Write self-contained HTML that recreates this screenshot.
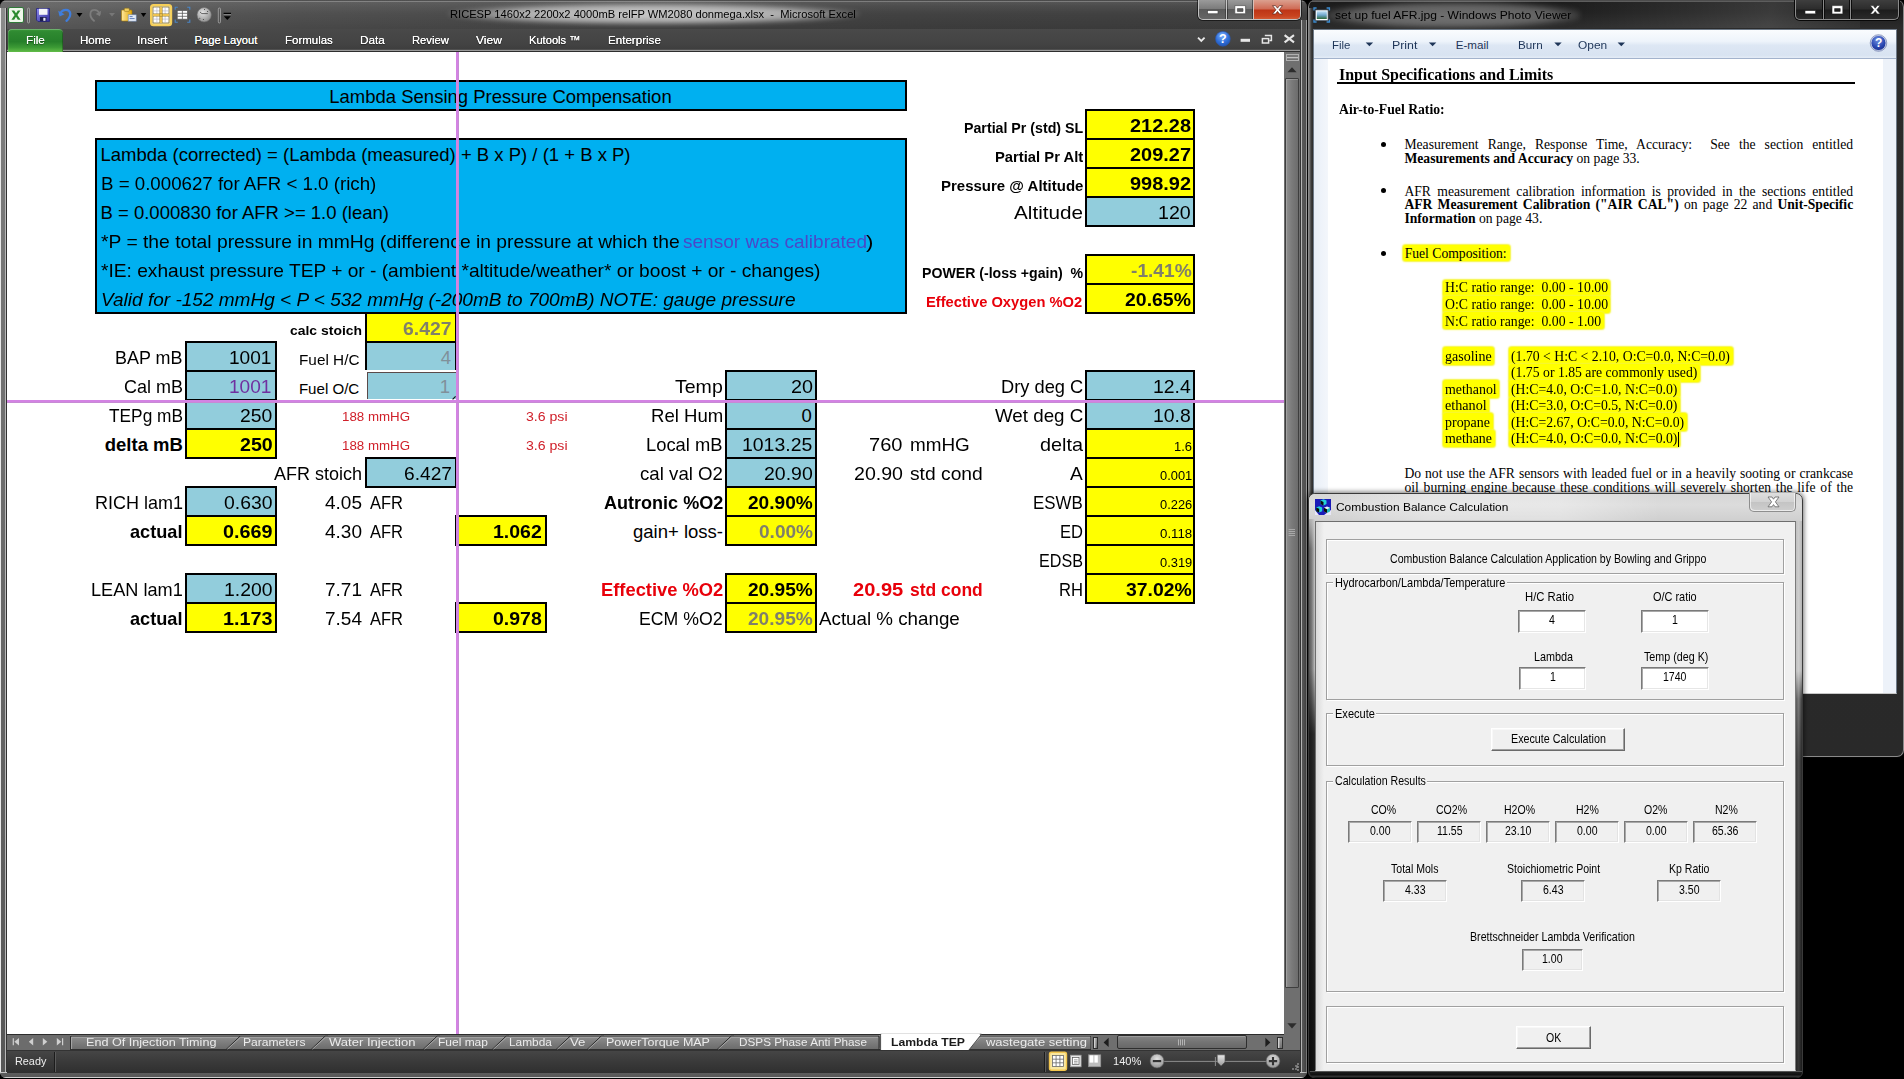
<!DOCTYPE html>
<html><head><meta charset="utf-8"><title>Lambda TEP</title>
<style>
html,body{margin:0;padding:0;background:#000;}
body{width:1904px;height:1079px;position:relative;overflow:hidden;font-family:'Liberation Sans',sans-serif;}
.b{position:absolute;box-sizing:border-box;}
.t{position:absolute;white-space:pre;line-height:1;transform-origin:0 0;}
svg{position:absolute;overflow:visible;}

#excel{position:absolute;left:0;top:0;width:1307px;height:1078px;border-radius:7px 7px 6px 6px;overflow:hidden;background:#4a4a4a;box-shadow:inset 0 0 0 1px #2b2b2b;}
#sheet{position:absolute;left:7px;top:52px;width:1277px;height:982px;background:#fff;overflow:hidden;}
.rt{color:#fff;text-shadow:0 0 1px rgba(255,255,255,.55);}
.st{color:#e6e6e6;}

#photo{position:absolute;left:0;top:0;width:1904px;height:1079px;}
.hl{position:absolute;background:#ffff00;border-radius:3px;box-shadow:0 0 1.5px 0.5px #f6f63a;}

#dialog{position:absolute;left:0;top:0;width:1904px;height:1079px;}
.gb{position:absolute;box-sizing:border-box;border:1px solid #a0a0a0;box-shadow:inset 1px 1px 0 #fff,1px 1px 0 #fff;}
.gl{position:absolute;background:#f0f0f0;height:12px;}
.in{position:absolute;box-sizing:border-box;background:#fff;border:1px solid;border-color:#7a7a7a #fff #fff #7a7a7a;box-shadow:inset 1px 1px 0 #a8a8a8,inset -1px -1px 0 #e6e6e6;}
.ro{position:absolute;box-sizing:border-box;background:#f0f0f0;border:1px solid;border-color:#7a7a7a #fff #fff #7a7a7a;box-shadow:inset 1px 1px 0 #a8a8a8,inset -1px -1px 0 #e3e3e3;}
.bt{position:absolute;box-sizing:border-box;background:#f0f0f0;border:1px solid;border-color:#fff #6a6a6a #6a6a6a #fff;box-shadow:inset -1px -1px 0 #a0a0a0,inset 1px 1px 0 #f8f8f8;}
</style></head>
<body>
<!-- Windows Photo Viewer -->
<div id="photo"><div class="b" style="left:1308px;top:0px;width:596px;height:756.6px;background:linear-gradient(#0c0c0c 0,#8c8c8c 1px,#1c1c1c 2.2px,#1e1e1e 12px,#2b2b2b 28px,#292929 100%);border-radius:7px;border:1px solid #8a8a8a;border-top:none;box-shadow:0 0 0 1px #050505;"></div>
<div class="b" style="left:1560px;top:2px;width:300px;height:26px;background:linear-gradient(100deg,rgba(255,255,255,0) 0,rgba(255,255,255,.08) 45%,rgba(255,255,255,.13) 70%,rgba(255,255,255,.04) 100%);"></div>
<div class="b" style="left:1309px;top:8px;width:4.4px;height:742px;background:linear-gradient(90deg,#3a3a3a 0,#9a9a9a .8px,#4a4a4a 1.6px,#2c2c2c 3.4px,#5a5a5a 4.4px);"></div>
<div class="b" style="left:1326px;top:2px;width:254px;height:26px;background:radial-gradient(ellipse at center,rgba(255,255,255,.36) 0,rgba(255,255,255,.3) 55%,rgba(255,255,255,0) 78%);border-radius:13px;filter:blur(2.5px);"></div>
<svg style="left:1313px;top:6px" width="18" height="18" viewBox="0 0 18 18">
<defs><linearGradient id="gpi" x1="0" y1="0" x2="0" y2="1"><stop offset="0" stop-color="#bfe0f6"/><stop offset=".5" stop-color="#6fa6cc"/><stop offset="1" stop-color="#2f6a3a"/></linearGradient></defs>
<path d="M1 4.4 V2 H3.6 M13.6 2 H16.4 V4.4 M16.4 13.6 V16 H13.6 M3.6 16 H1 V13.6" fill="none" stroke="#3c8cd0" stroke-width="1.4"/>
<rect x="2.6" y="4" width="12.4" height="10.4" fill="#fff" stroke="#5a6a7a" stroke-width=".7"/>
<rect x="3.8" y="5.2" width="10" height="7.8" fill="url(#gpi)"/>
</svg>
<div class="b" style="left:1795px;top:0;width:104px;height:20.4px;border:1px solid #8a8a8a;border-top:none;border-radius:0 0 5px 5px;background:linear-gradient(#3e3e3e,#2c2c2c 48%,#1c1c1c 52%,#2a2a2a);box-shadow:0 0 0 1px #080808;"></div>
<div class="b" style="left:1822.5px;top:0;width:1px;height:19px;background:#8a8a8a;box-shadow:1px 0 0 #0c0c0c,-1px 0 0 #0c0c0c;"></div>
<div class="b" style="left:1849.5px;top:0;width:1px;height:19px;background:#8a8a8a;box-shadow:1px 0 0 #0c0c0c,-1px 0 0 #0c0c0c;"></div>
<svg style="left:1795px;top:0" width="104" height="20" viewBox="0 0 104 20">
<rect x="10" y="10.6" width="10.6" height="3.3" fill="#fff" stroke="#222" stroke-width=".6"/>
<path d="M37 5.6 H47.8 V13.9 H37 Z M39.6 8.6 V11.4 H45.2 V8.6 Z" fill="#fff" fill-rule="evenodd" stroke="#222" stroke-width=".6"/>
<path d="M75.2 5.6 h3 l2 2.6 l2 -2.6 h3 l-3.4 4.2 l3.4 4.2 h-3 l-2 -2.6 l-2 2.6 h-3 l3.4 -4.2 z" fill="#fff" stroke="#222" stroke-width=".6"/>
</svg>
<div class="b" style="left:1313.4px;top:29.2px;width:583.6px;height:665px;background:#fff;border:1px solid #6e7a88;border-bottom-color:#c8c8c8;"></div>
<div class="b" style="left:1314px;top:30px;width:582.4px;height:28.6px;background:linear-gradient(#fafcfe 0,#eef4fb 40%,#dde7f4 55%,#d8e3f1 90%,#e4ecf6 100%);border-bottom:1px solid #a3b3cc;"></div>
<div class="b" style="left:1314px;top:59.4px;width:14px;height:634px;background:linear-gradient(90deg,#e9eff8,#f3f6fb);"></div>
<div class="b" style="left:1883px;top:59.4px;width:13.4px;height:634px;background:#edf2f9;"></div>
<svg style="left:0;top:0" width="1904" height="60" viewBox="0 0 1904 60"><path d="M1365.7 42.4 H1373.1000000000001 L1369.4 46.2 Z" fill="#1e3558"/><path d="M1428.8999999999999 42.4 H1436.3 L1432.6 46.2 Z" fill="#1e3558"/><path d="M1554.3 42.4 H1561.7 L1558 46.2 Z" fill="#1e3558"/><path d="M1617.6 42.4 H1625.0 L1621.3 46.2 Z" fill="#1e3558"/><defs><radialGradient id="ghq" cx=".45" cy=".3" r=".8"><stop offset="0" stop-color="#6f8fe0"/><stop offset=".6" stop-color="#2946b0"/><stop offset="1" stop-color="#162a80"/></radialGradient></defs><circle cx="1878.5" cy="43" r="7.6" fill="url(#ghq)" stroke="#c8d0e8" stroke-width="1"/><circle cx="1878.5" cy="43" r="8.3" fill="none" stroke="#5a6aa0" stroke-width=".6"/><text x="1878.6" y="47.3" text-anchor="middle" font-family="Liberation Sans,sans-serif" font-weight="700" font-size="12" fill="#fff">?</text></svg>
<div class="b" style="left:1337px;top:82px;width:518px;height:2.2px;background:#000;"></div>
<div class="b" style="left:1380.8px;top:141.8px;width:5px;height:5px;background:#000;border-radius:50%;"></div>
<div class="b" style="left:1380.8px;top:188.1px;width:5px;height:5px;background:#000;border-radius:50%;"></div>
<div class="b" style="left:1380.8px;top:250.8px;width:5px;height:5px;background:#000;border-radius:50%;"></div><div class="hl" style="left:1402.5px;top:244.6px;width:107.0px;height:16.599999999999994px"></div><div class="hl" style="left:1443px;top:279.6px;width:167.4000000000001px;height:17.399999999999977px"></div><div class="hl" style="left:1443px;top:296px;width:167.4000000000001px;height:17.399999999999977px"></div><div class="hl" style="left:1443px;top:312.4px;width:160.5px;height:17.0px"></div><div class="hl" style="left:1443px;top:347.2px;width:51.40000000000009px;height:17.80000000000001px"></div><div class="hl" style="left:1443px;top:380.4px;width:56.40000000000009px;height:17.600000000000023px"></div><div class="hl" style="left:1443px;top:397px;width:46.40000000000009px;height:17.600000000000023px"></div><div class="hl" style="left:1443px;top:413.4px;width:49.59999999999991px;height:17.600000000000023px"></div><div class="hl" style="left:1443px;top:430px;width:51.59999999999991px;height:17.19999999999999px"></div><div class="hl" style="left:1509px;top:347.2px;width:223.5999999999999px;height:17.80000000000001px"></div><div class="hl" style="left:1509px;top:364px;width:191px;height:18px"></div><div class="hl" style="left:1509px;top:380.4px;width:171px;height:17.600000000000023px"></div><div class="hl" style="left:1509px;top:397px;width:171px;height:17.600000000000023px"></div><div class="hl" style="left:1509px;top:413.4px;width:177.79999999999995px;height:17.600000000000023px"></div><div class="hl" style="left:1509px;top:430px;width:171px;height:17.19999999999999px"></div><div class="b" style="left:1404.4px;top:137.77px;width:448.79999999999995px;height:13.65px;line-height:1;font-size:13.65px;font-family:'Liberation Serif',serif;text-align:justify;text-align-last:justify;white-space:normal;">Measurement Range, Response Time, Accuracy:&nbsp; See the section entitled</div><div class="b" style="left:1404.4px;top:151.57px;width:448.79999999999995px;height:13.65px;line-height:1;font-size:13.65px;font-family:'Liberation Serif',serif;text-align:left;text-align-last:left;white-space:pre;"><b>Measurements and Accuracy</b> on page 33.</div><div class="b" style="left:1404.4px;top:184.57px;width:448.79999999999995px;height:13.65px;line-height:1;font-size:13.65px;font-family:'Liberation Serif',serif;text-align:justify;text-align-last:justify;white-space:normal;">AFR measurement calibration information is provided in the sections entitled</div><div class="b" style="left:1404.4px;top:198.37px;width:448.79999999999995px;height:13.65px;line-height:1;font-size:13.65px;font-family:'Liberation Serif',serif;text-align:justify;text-align-last:justify;white-space:normal;"><b>AFR Measurement Calibration ("AIR CAL")</b> on page 22 and <b>Unit-Specific</b></div><div class="b" style="left:1404.4px;top:212.07px;width:448.79999999999995px;height:13.65px;line-height:1;font-size:13.65px;font-family:'Liberation Serif',serif;text-align:left;text-align-last:left;white-space:pre;"><b>Information</b> on page 43.</div><div class="b" style="left:1404.4px;top:467.07px;width:448.79999999999995px;height:13.65px;line-height:1;font-size:13.65px;font-family:'Liberation Serif',serif;text-align:justify;text-align-last:justify;white-space:normal;">Do not use the AFR sensors with leaded fuel or in a heavily sooting or crankcase</div><div class="b" style="left:1404.4px;top:480.87px;width:448.79999999999995px;height:13.65px;line-height:1;font-size:13.65px;font-family:'Liberation Serif',serif;text-align:justify;text-align-last:justify;white-space:normal;">oil burning engine because these conditions will severely shorten the life of the</div><span class="t" style="left:1335.03px;top:9.08px;font-size:11.60px;transform:scaleX(1.0398);">set up fuel AFR.jpg - Windows Photo Viewer</span>
<span class="t" style="left:1332.03px;top:39.38px;font-size:11.60px;color:#1e3558;transform:scaleX(0.9865);">File</span>
<span class="t" style="left:1392.03px;top:39.38px;font-size:11.60px;color:#1e3558;transform:scaleX(1.0665);">Print</span>
<span class="t" style="left:1455.78px;top:39.38px;font-size:11.60px;color:#1e3558;">E-mail</span>
<span class="t" style="left:1517.78px;top:39.38px;font-size:11.60px;color:#1e3558;transform:scaleX(1.0076);">Burn</span>
<span class="t" style="left:1577.53px;top:39.38px;font-size:11.60px;color:#1e3558;transform:scaleX(1.0286);">Open</span>
<span class="t" style="left:1339.07px;top:66.58px;font-size:15.90px;font-family:'Liberation Serif',serif;font-weight:700;transform:scaleX(1.0046);">Input Specifications and Limits</span>
<span class="t" style="left:1339.13px;top:103.37px;font-size:13.65px;font-family:'Liberation Serif',serif;font-weight:700;transform:scaleX(1.0046);">Air-to-Fuel Ratio:</span>
<span class="t" style="left:1404.63px;top:247.17px;font-size:13.65px;font-family:'Liberation Serif',serif;">Fuel Composition:</span>
<span class="t" style="left:1445.38px;top:281.47px;font-size:13.65px;font-family:'Liberation Serif',serif;transform:scaleX(1.0108);">H:C ratio range:  0.00 - 10.00</span>
<span class="t" style="left:1445.38px;top:298.27px;font-size:13.65px;font-family:'Liberation Serif',serif;transform:scaleX(1.0108);">O:C ratio range:  0.00 - 10.00</span>
<span class="t" style="left:1445.38px;top:314.97px;font-size:13.65px;font-family:'Liberation Serif',serif;transform:scaleX(1.0101);">N:C ratio range:  0.00 - 1.00</span>
<span class="t" style="left:1445.38px;top:350.07px;font-size:13.65px;font-family:'Liberation Serif',serif;transform:scaleX(1.0274);">gasoline</span>
<span class="t" style="left:1511.38px;top:350.07px;font-size:13.65px;font-family:'Liberation Serif',serif;transform:scaleX(1.0075);">(1.70 &lt; H:C &lt; 2.10, O:C=0.0, N:C=0.0)</span>
<span class="t" style="left:1511.38px;top:366.47px;font-size:13.65px;font-family:'Liberation Serif',serif;transform:scaleX(1.0060);">(1.75 or 1.85 are commonly used)</span>
<span class="t" style="left:1445.38px;top:382.87px;font-size:13.65px;font-family:'Liberation Serif',serif;transform:scaleX(1.0185);">methanol</span>
<span class="t" style="left:1511.38px;top:382.87px;font-size:13.65px;font-family:'Liberation Serif',serif;transform:scaleX(1.0073);">(H:C=4.0, O:C=1.0, N:C=0.0)</span>
<span class="t" style="left:1445.38px;top:399.37px;font-size:13.65px;font-family:'Liberation Serif',serif;transform:scaleX(1.0388);">ethanol</span>
<span class="t" style="left:1511.38px;top:399.37px;font-size:13.65px;font-family:'Liberation Serif',serif;transform:scaleX(1.0073);">(H:C=3.0, O:C=0.5, N:C=0.0)</span>
<span class="t" style="left:1445.38px;top:415.77px;font-size:13.65px;font-family:'Liberation Serif',serif;transform:scaleX(1.0233);">propane</span>
<span class="t" style="left:1511.38px;top:415.77px;font-size:13.65px;font-family:'Liberation Serif',serif;transform:scaleX(1.0065);">(H:C=2.67, O:C=0.0, N:C=0.0)</span>
<span class="t" style="left:1445.38px;top:432.17px;font-size:13.65px;font-family:'Liberation Serif',serif;transform:scaleX(1.0162);">methane</span>
<span class="t" style="left:1511.38px;top:432.17px;font-size:13.65px;font-family:'Liberation Serif',serif;transform:scaleX(1.0073);">(H:C=4.0, O:C=0.0, N:C=0.0)</span><div class="b" style="left:1678px;top:431.5px;width:1px;height:15.5px;background:#000;"></div></div>
<!-- Excel window -->
<div id="excel"><div class="b" style="left:0px;top:0px;width:1307px;height:29px;background:linear-gradient(90deg,#626262 0,#5a5a5a 120px,#505050 300px,#484848 600px,#424242 900px,#404040 1307px);"></div>
<div class="b" style="left:0px;top:0px;width:1307px;height:29px;background:linear-gradient(rgba(20,20,20,.6) 0,rgba(200,200,200,.5) 1.3px,rgba(140,140,140,.25) 2.4px,rgba(255,255,255,.06) 6px,rgba(0,0,0,0) 14px,rgba(0,0,0,.1) 28px);"></div>
<div class="b" style="left:0px;top:29px;width:1307px;height:23px;background:linear-gradient(#494949 0,#434343 15px,#3e3e3e 20px,#606060 21px,#9a9a9a 21.2px,#9a9a9a 22px,#2e2e2e 22.1px);"></div>
<div class="b" style="left:7.5px;top:28.5px;width:55px;height:23px;background:linear-gradient(#3d9a3c 0,#2f8a31 12%,#26802a 55%,#3c9a35 80%,#62bd48 100%);border-radius:4px 4px 0 0;box-shadow:inset 0 1px 0 rgba(255,255,255,.25),inset 1px 0 0 rgba(255,255,255,.12),inset -1px 0 0 rgba(0,0,0,.25);"></div>
<div class="b" style="left:0px;top:8px;width:7px;height:1066px;background:linear-gradient(90deg,#e8e8e8 0,#e8e8e8 1px,#6c6c6c 1.1px,#6c6c6c 5px,#b8b8b8 5.1px,#b8b8b8 6px,#333 6.1px);"></div>
<div class="b" style="left:1px;top:8px;width:4px;height:1066px;background:linear-gradient(rgba(255,255,255,.22) 0,rgba(255,255,255,.12) 80px,rgba(0,0,0,0) 500px,rgba(0,0,0,.2) 100%);"></div>
<div class="b" style="left:1300px;top:20px;width:7px;height:1054px;background:linear-gradient(90deg,#333 0,#333 1px,#b4b4b4 1.1px,#b4b4b4 2px,#585858 2.1px,#505050 6px,#9a9a9a 6.1px);"></div>
<div class="b" style="left:0px;top:1072.3px;width:1307px;height:5.7px;background:linear-gradient(#c4c4c4 0,#c4c4c4 1px,#5c5c5c 1.1px,#585858 4.6px,#d0d0d0 4.8px);"></div>
<div class="b" style="left:448px;top:3px;width:412px;height:22px;background:radial-gradient(ellipse at center,rgba(255,255,255,.72) 0,rgba(255,255,255,.55) 50%,rgba(255,255,255,0) 74%);border-radius:11px;filter:blur(2px);"></div>
<svg style="left:0;top:0" width="240" height="28" viewBox="0 0 240 28">
<defs>
<linearGradient id="gsv" x1="0" y1="0" x2="1" y2="1"><stop offset="0" stop-color="#8f8cf0"/><stop offset="1" stop-color="#2f2b9a"/></linearGradient>
<linearGradient id="gpa" x1="0" y1="0" x2="1" y2="0"><stop offset="0" stop-color="#ffe9a0"/><stop offset="1" stop-color="#e0a400"/></linearGradient>
<radialGradient id="gsp" cx=".4" cy=".35" r=".7"><stop offset="0" stop-color="#e4e4e4"/><stop offset="1" stop-color="#8c8c8c"/></radialGradient>
</defs>
<!-- excel icon -->
<rect x="8.5" y="7.5" width="15" height="15" rx="1.5" fill="#eef7ea" stroke="#2f7a38" stroke-width="1"/>
<path d="M11.5 10.5 L14.2 10.5 L16 13.3 L17.8 10.5 L20.5 10.5 L17.4 15 L20.6 19.8 L17.8 19.8 L16 16.8 L14.2 19.8 L11.4 19.8 L14.6 15 Z" fill="#2c8a2f"/>
<rect x="27.5" y="8" width="2" height="15" rx="1" fill="none" stroke="#a8a8a8" stroke-width=".8"/>
<!-- save -->
<path d="M36.5 8.5 H49.5 V21.5 H38 L36.5 20 Z" fill="url(#gsv)" stroke="#26247a" stroke-width=".8"/>
<rect x="39" y="8.8" width="8.5" height="6" fill="#f4f4f8"/>
<rect x="40" y="17" width="6.5" height="4.2" fill="#1c1c50"/><rect x="43.3" y="17.8" width="2.2" height="3" fill="#e8e8f4"/>
<!-- undo -->
<path d="M60 13.8 C63 8.5 69.5 8.8 70.2 13.5 C70.7 17 68 19.5 66.5 20.8" fill="none" stroke="#3f7ddc" stroke-width="2.3" stroke-linecap="round"/>
<path d="M58.2 10.8 L59.6 16.6 L64.6 14.2 Z" fill="#3f7ddc"/>
<path d="M76.5 13 H82.5 L79.5 17 Z" fill="#000"/>
<!-- redo (disabled) -->
<path d="M99.8 13.8 C97 8.5 91 8.8 90.4 13.5 C90 17 92.5 19.5 94 20.8" fill="none" stroke="#7c7c7c" stroke-width="1.8" stroke-linecap="round"/>
<path d="M101.2 10.8 L100 16.2 L95.6 14 Z" fill="#7c7c7c"/>
<path d="M109 13 H115 L112 16.6 Z" fill="#777"/>
<!-- paste -->
<rect x="121.5" y="10" width="10.5" height="11" rx="1" fill="url(#gpa)" stroke="#a87800" stroke-width=".6"/>
<rect x="124.3" y="8.2" width="5" height="3.2" rx=".8" fill="#f2d060" stroke="#8a6a10" stroke-width=".5"/>
<rect x="128.2" y="14.8" width="8" height="6.4" fill="#e4ecf8" stroke="#7088b0" stroke-width=".6"/>
<path d="M129.6 16.6 h3 M129.6 18.6 h5" stroke="#5070b0" stroke-width=".9"/>
<path d="M140.8 13 H146.3 L143.5 17 Z" fill="#000"/>
<!-- highlighted button -->
<rect x="151" y="5" width="20.2" height="20.2" rx="2.5" fill="#fbe9a6" stroke="#f6cf58" stroke-width="2"/>
<rect x="153" y="7" width="16" height="16" fill="#fff" stroke="#6b5a20" stroke-width=".7"/>
<path d="M156.9 7 V23 M165.1 7 V23 M153 10.9 H169 M153 19.1 H169" stroke="#b8b8c8" stroke-width=".7"/>
<path d="M161 7 V23 M153 15 H169" stroke="#f3c754" stroke-width="2.2"/>
<path d="M159.6 7 V23 M162.4 7 V23 M153 13.6 H169 M153 16.4 H169" stroke="#8a7428" stroke-width=".5"/>
<!-- frame icon -->
<path d="M175.2 9.8 V7.2 H177.8 M187.2 7.2 H189.8 V9.8 M189.8 19.6 V22.2 H187.2 M177.8 22.2 H175.2 V19.6" fill="none" stroke="#4a86c8" stroke-width="1.1"/>
<rect x="177.2" y="10.4" width="10.4" height="8.8" fill="#fff" stroke="#5a5a5a" stroke-width=".8"/>
<path d="M182.4 10.4 V19.2 M177.2 13.3 H187.6 M177.2 16.3 H187.6" stroke="#5a5a5a" stroke-width=".8"/>
<!-- sphere -->
<circle cx="204.2" cy="14.8" r="7.2" fill="url(#gsp)" stroke="#6a6a6a" stroke-width=".6"/>
<path d="M200 12 L201.8 13.6 H207.8" stroke="#444" stroke-width=".8" fill="none"/>
<circle cx="204.5" cy="9.6" r=".5" fill="#333"/><circle cx="207.6" cy="11.4" r=".5" fill="#333"/><circle cx="199.8" cy="18.2" r=".5" fill="#333"/><circle cx="203.4" cy="19.6" r=".5" fill="#333"/>
<rect x="218.3" y="8" width="2.2" height="15" rx="1.1" fill="none" stroke="#a8a8a8" stroke-width=".8"/>
<path d="M223.6 13.4 H231" stroke="#000" stroke-width="1.2"/><path d="M223.8 16.2 H230.8 L227.3 20 Z" fill="#000"/>
<path d="M223.6 14.6 H231" stroke="#ddd" stroke-width=".6" opacity=".6"/>
</svg>
<div class="b" style="left:1198px;top:0;width:103px;height:20px;border:1px solid #c2c2c2;border-top:none;border-radius:0 0 5px 5px;overflow:hidden;background:linear-gradient(#9a9a9a,#7c7c7c 45%,#5a5a5a 50%,#666 100%);box-shadow:0 0 0 1px rgba(0,0,0,.55);">
<div class="b" style="left:54px;top:0;width:48px;height:20px;background:linear-gradient(#dba08f,#cf6a54 45%,#bd3416 50%,#c8431f 80%,#d4603a);"></div>
<div class="b" style="left:26.5px;top:0;width:1px;height:20px;background:#c8c8c8;box-shadow:1px 0 0 rgba(0,0,0,.4),-1px 0 0 rgba(0,0,0,.3);"></div>
<div class="b" style="left:54px;top:0;width:1px;height:20px;background:#d8c0b8;box-shadow:-1px 0 0 rgba(0,0,0,.4);"></div>
</div>
<svg style="left:1198px;top:0" width="103" height="20" viewBox="0 0 103 20">
<rect x="9.5" y="10.6" width="10.5" height="3.2" fill="#fff" stroke="#4a4a4a" stroke-width=".7"/>
<path d="M36.8 5.6 H47.6 V13.8 H36.8 Z M39.4 8.6 V11.4 H45 V8.6 Z" fill="#fff" fill-rule="evenodd" stroke="#4a4a4a" stroke-width=".7"/>
<path d="M74.5 5.6 h3 l2 2.6 l2 -2.6 h3 l-3.4 4.2 l3.4 4.2 h-3 l-2 -2.6 l-2 2.6 h-3 l3.4 -4.2 z" fill="#fff" stroke="#5a2418" stroke-width=".7"/>
</svg>
<svg style="left:1190px;top:30px" width="112" height="20" viewBox="1190 30 112 20">
<defs><radialGradient id="ghp" cx=".45" cy=".3" r=".8"><stop offset="0" stop-color="#7fb0ff"/><stop offset=".55" stop-color="#2f6fd8"/><stop offset="1" stop-color="#1c4ca8"/></radialGradient></defs>
<path d="M1198 37.6 L1201.3 41 L1204.6 37.6" fill="none" stroke="#e8e8e8" stroke-width="1.8"/>
<circle cx="1222.9" cy="38.8" r="7.4" fill="url(#ghp)" stroke="#2a58b0" stroke-width=".6"/>
<text x="1222.9" y="43.2" text-anchor="middle" font-family="Liberation Sans,sans-serif" font-weight="700" font-size="12.5" fill="#fff">?</text>
<rect x="1240.6" y="38.8" width="9.4" height="3" fill="#e6e6e6"/>
<path d="M1264.8 35.6 H1271.4 V40.6 H1269.4" fill="none" stroke="#e6e6e6" stroke-width="1.5"/>
<rect x="1262.4" y="38.6" width="6.2" height="4.4" fill="none" stroke="#e6e6e6" stroke-width="1.5"/>
<path d="M1284.6 35.2 L1294 42.4 M1294 35.2 L1284.6 42.4" stroke="#e6e6e6" stroke-width="2.1"/>
</svg>
<div id="sheet"><div class="b" style="left:-7px;top:-52px;width:1904px;height:1079px;"><div class="b" style="left:95px;top:80px;width:812px;height:31px;background:#00b0f0;border:2px solid #000;"></div>
<div class="b" style="left:95px;top:138px;width:812px;height:176px;background:#00b0f0;border:2px solid #000;"></div>
<div class="b" style="left:1085px;top:109px;width:110px;height:31px;background:#ffff00;border:2px solid #000;"></div>
<div class="b" style="left:1085px;top:138px;width:110px;height:31px;background:#ffff00;border:2px solid #000;"></div>
<div class="b" style="left:1085px;top:167px;width:110px;height:31px;background:#ffff00;border:2px solid #000;"></div>
<div class="b" style="left:1085px;top:196px;width:110px;height:31px;background:#92cddc;border:2px solid #000;"></div>
<div class="b" style="left:1085px;top:254px;width:110px;height:31px;background:#ffff00;border:2px solid #000;"></div>
<div class="b" style="left:1085px;top:283px;width:110px;height:31px;background:#ffff00;border:2px solid #000;"></div>
<div class="b" style="left:1085px;top:370px;width:110px;height:31px;background:#92cddc;border:2px solid #000;"></div>
<div class="b" style="left:1085px;top:399px;width:110px;height:31px;background:#92cddc;border:2px solid #000;"></div>
<div class="b" style="left:1085px;top:428px;width:110px;height:31px;background:#ffff00;border:2px solid #000;"></div>
<div class="b" style="left:1085px;top:457px;width:110px;height:31px;background:#ffff00;border:2px solid #000;"></div>
<div class="b" style="left:1085px;top:486px;width:110px;height:31px;background:#ffff00;border:2px solid #000;"></div>
<div class="b" style="left:1085px;top:515px;width:110px;height:31px;background:#ffff00;border:2px solid #000;"></div>
<div class="b" style="left:1085px;top:544px;width:110px;height:31px;background:#ffff00;border:2px solid #000;"></div>
<div class="b" style="left:1085px;top:573px;width:110px;height:31px;background:#ffff00;border:2px solid #000;"></div>
<div class="b" style="left:725px;top:370px;width:92px;height:31px;background:#92cddc;border:2px solid #000;"></div>
<div class="b" style="left:725px;top:399px;width:92px;height:31px;background:#92cddc;border:2px solid #000;"></div>
<div class="b" style="left:725px;top:428px;width:92px;height:31px;background:#92cddc;border:2px solid #000;"></div>
<div class="b" style="left:725px;top:457px;width:92px;height:31px;background:#92cddc;border:2px solid #000;"></div>
<div class="b" style="left:725px;top:486px;width:92px;height:31px;background:#ffff00;border:2px solid #000;"></div>
<div class="b" style="left:725px;top:515px;width:92px;height:31px;background:#ffff00;border:2px solid #000;"></div>
<div class="b" style="left:725px;top:573px;width:92px;height:31px;background:#ffff00;border:2px solid #000;"></div>
<div class="b" style="left:725px;top:602px;width:92px;height:31px;background:#ffff00;border:2px solid #000;"></div>
<div class="b" style="left:185px;top:341px;width:92px;height:31px;background:#92cddc;border:2px solid #000;"></div>
<div class="b" style="left:185px;top:370px;width:92px;height:31px;background:#92cddc;border:2px solid #000;"></div>
<div class="b" style="left:185px;top:399px;width:92px;height:31px;background:#92cddc;border:2px solid #000;"></div>
<div class="b" style="left:185px;top:428px;width:92px;height:31px;background:#ffff00;border:2px solid #000;"></div>
<div class="b" style="left:185px;top:486px;width:92px;height:31px;background:#92cddc;border:2px solid #000;"></div>
<div class="b" style="left:185px;top:515px;width:92px;height:31px;background:#ffff00;border:2px solid #000;"></div>
<div class="b" style="left:185px;top:573px;width:92px;height:31px;background:#92cddc;border:2px solid #000;"></div>
<div class="b" style="left:185px;top:602px;width:92px;height:31px;background:#ffff00;border:2px solid #000;"></div>
<div class="b" style="left:365px;top:312px;width:92px;height:31px;background:#ffff00;border:2px solid #000;"></div>
<div class="b" style="left:365px;top:341px;width:92px;height:29px;background:#92cddc;border:2px solid #000;border-bottom:none;"></div>
<div class="b" style="left:367px;top:372px;width:88.5px;height:27px;background:#92cddc;border-top:1px solid #5a4a4a;border-left:1px solid #5a4a4a;"></div>
<div class="b" style="left:365px;top:457px;width:92px;height:31px;background:#92cddc;border:2px solid #000;"></div>
<div class="b" style="left:455px;top:515px;width:92px;height:31px;background:#ffff00;border:2px solid #000;"></div>
<div class="b" style="left:455px;top:602px;width:92px;height:31px;background:#ffff00;border:2px solid #000;"></div><span class="t" style="left:329.25px;top:87.64px;font-size:18.50px;">Lambda Sensing Pressure Compensation</span>
<span class="t" style="left:100.50px;top:145.64px;font-size:18.50px;">Lambda (corrected) = (Lambda (measured) + B x P) / (1 + B x P)</span>
<span class="t" style="left:100.50px;top:174.64px;font-size:18.50px;transform:scaleX(1.0101);">B = 0.000627 for AFR &lt; 1.0 (rich)</span>
<span class="t" style="left:100.50px;top:203.64px;font-size:18.50px;">B = 0.000830 for AFR &gt;= 1.0 (lean)</span>
<span class="t" style="left:100.50px;top:232.64px;font-size:18.50px;transform:scaleX(1.0424);">*P = the total pressure in mmHg (difference in pressure at which the </span>
<span class="t" style="left:683.00px;top:232.64px;font-size:18.50px;color:#4a48c8;transform:scaleX(1.0284);">sensor was calibrated</span>
<span class="t" style="left:865.85px;top:232.64px;font-size:18.50px;transform:scaleX(1.2005);">)</span>
<span class="t" style="left:100.50px;top:261.64px;font-size:18.50px;transform:scaleX(1.0345);">*IE: exhaust pressure TEP + or - (ambient *altitude/weather* or boost + or - changes)</span>
<span class="t" style="left:100.50px;top:290.64px;font-size:18.50px;font-style:italic;transform:scaleX(1.0286);">Valid for -152 mmHg &lt; P &lt; 532 mmHg (-200mB to 700mB) NOTE: gauge pressure</span>
<span class="t" style="left:963.89px;top:119.52px;font-size:15.10px;font-weight:700;transform:scaleX(0.9410);">Partial Pr (std) SL</span>
<span class="t" style="left:1129.75px;top:116.64px;font-size:18.50px;font-weight:700;transform:scaleX(1.0780);">212.28</span>
<span class="t" style="left:994.89px;top:148.52px;font-size:15.10px;font-weight:700;transform:scaleX(0.9795);">Partial Pr Alt</span>
<span class="t" style="left:1129.75px;top:145.64px;font-size:18.50px;font-weight:700;transform:scaleX(1.0780);">209.27</span>
<span class="t" style="left:940.64px;top:177.52px;font-size:15.10px;font-weight:700;transform:scaleX(0.9936);">Pressure @ Altitude</span>
<span class="t" style="left:1129.75px;top:174.64px;font-size:18.50px;font-weight:700;transform:scaleX(1.0780);">998.92</span>
<span class="t" style="left:1014.25px;top:203.64px;font-size:18.50px;transform:scaleX(1.1182);">Altitude</span>
<span class="t" style="left:1158.00px;top:203.64px;font-size:18.50px;transform:scaleX(1.0609);">120</span>
<span class="t" style="left:921.89px;top:264.52px;font-size:15.10px;font-weight:700;transform:scaleX(0.9351);">POWER (-loss +gain)  %</span>
<span class="t" style="left:1130.50px;top:261.64px;font-size:18.50px;color:#80806a;font-weight:700;transform:scaleX(1.0363);">-1.41%</span>
<span class="t" style="left:926.39px;top:293.52px;font-size:15.10px;color:#e8000a;font-weight:700;transform:scaleX(0.9746);">Effective Oxygen %O2</span>
<span class="t" style="left:1125.25px;top:290.64px;font-size:18.50px;font-weight:700;transform:scaleX(1.0518);">20.65%</span>
<span class="t" style="left:290.46px;top:323.96px;font-size:13.40px;font-weight:700;transform:scaleX(1.0407);">calc stoich</span>
<span class="t" style="left:403.25px;top:319.64px;font-size:18.50px;color:#80806a;font-weight:700;transform:scaleX(1.0476);">6.427</span>
<span class="t" style="left:115.25px;top:348.64px;font-size:18.50px;transform:scaleX(0.9702);">BAP mB</span>
<span class="t" style="left:229.25px;top:348.64px;font-size:18.50px;transform:scaleX(1.0326);">1001</span>
<span class="t" style="left:298.89px;top:351.52px;font-size:15.10px;transform:scaleX(1.0151);">Fuel H/C</span>
<span class="t" style="left:440.71px;top:348.64px;font-size:18.50px;color:#80909a;">4</span>
<span class="t" style="left:123.75px;top:377.64px;font-size:18.50px;transform:scaleX(0.9728);">Cal mB</span>
<span class="t" style="left:229.25px;top:377.64px;font-size:18.50px;color:#7030a0;transform:scaleX(1.0326);">1001</span>
<span class="t" style="left:298.89px;top:380.52px;font-size:15.10px;">Fuel O/C</span>
<span class="t" style="left:439.71px;top:377.64px;font-size:18.50px;color:#80909a;">1</span>
<span class="t" style="left:108.75px;top:406.64px;font-size:18.50px;transform:scaleX(0.9348);">TEPg mB</span>
<span class="t" style="left:240.00px;top:406.64px;font-size:18.50px;transform:scaleX(1.0447);">250</span>
<span class="t" style="left:342.48px;top:411.46px;font-size:12.80px;color:#d0202a;transform:scaleX(1.0397);">188 mmHG</span>
<span class="t" style="left:525.73px;top:411.46px;font-size:12.80px;color:#d0202a;transform:scaleX(1.1014);">3.6 psi</span>
<span class="t" style="left:104.75px;top:435.64px;font-size:18.50px;font-weight:700;">delta mB</span>
<span class="t" style="left:240.00px;top:435.64px;font-size:18.50px;font-weight:700;transform:scaleX(1.0609);">250</span>
<span class="t" style="left:342.48px;top:440.46px;font-size:12.80px;color:#d0202a;transform:scaleX(1.0397);">188 mmHG</span>
<span class="t" style="left:525.73px;top:440.46px;font-size:12.80px;color:#d0202a;transform:scaleX(1.1014);">3.6 psi</span>
<span class="t" style="left:273.75px;top:464.64px;font-size:18.50px;transform:scaleX(0.9727);">AFR stoich</span>
<span class="t" style="left:403.75px;top:464.64px;font-size:18.50px;transform:scaleX(1.0368);">6.427</span>
<span class="t" style="left:94.75px;top:493.64px;font-size:18.50px;transform:scaleX(0.9728);">RICH lam1</span>
<span class="t" style="left:223.75px;top:493.64px;font-size:18.50px;transform:scaleX(1.0476);">0.630</span>
<span class="t" style="left:324.75px;top:493.64px;font-size:18.50px;transform:scaleX(1.0275);">4.05</span>
<span class="t" style="left:369.75px;top:493.64px;font-size:18.50px;transform:scaleX(0.8919);">AFR</span>
<span class="t" style="left:130.25px;top:522.64px;font-size:18.50px;font-weight:700;transform:scaleX(0.9819);">actual</span>
<span class="t" style="left:223.25px;top:522.64px;font-size:18.50px;font-weight:700;transform:scaleX(1.0692);">0.669</span>
<span class="t" style="left:324.75px;top:522.64px;font-size:18.50px;transform:scaleX(1.0275);">4.30</span>
<span class="t" style="left:369.75px;top:522.64px;font-size:18.50px;transform:scaleX(0.8919);">AFR</span>
<span class="t" style="left:493.00px;top:522.64px;font-size:18.50px;font-weight:700;transform:scaleX(1.0530);">1.062</span>
<span class="t" style="left:91.00px;top:580.64px;font-size:18.50px;transform:scaleX(0.9806);">LEAN lam1</span>
<span class="t" style="left:223.75px;top:580.64px;font-size:18.50px;transform:scaleX(1.0476);">1.200</span>
<span class="t" style="left:324.75px;top:580.64px;font-size:18.50px;transform:scaleX(1.0275);">7.71</span>
<span class="t" style="left:369.75px;top:580.64px;font-size:18.50px;transform:scaleX(0.8919);">AFR</span>
<span class="t" style="left:130.25px;top:609.64px;font-size:18.50px;font-weight:700;transform:scaleX(0.9819);">actual</span>
<span class="t" style="left:223.25px;top:609.64px;font-size:18.50px;font-weight:700;transform:scaleX(1.0692);">1.173</span>
<span class="t" style="left:324.75px;top:609.64px;font-size:18.50px;transform:scaleX(1.0275);">7.54</span>
<span class="t" style="left:369.75px;top:609.64px;font-size:18.50px;transform:scaleX(0.8919);">AFR</span>
<span class="t" style="left:493.00px;top:609.64px;font-size:18.50px;font-weight:700;transform:scaleX(1.0530);">0.978</span>
<span class="t" style="left:675.00px;top:377.64px;font-size:18.50px;transform:scaleX(1.0555);">Temp</span>
<span class="t" style="left:790.50px;top:377.64px;font-size:18.50px;transform:scaleX(1.0690);">20</span>
<span class="t" style="left:650.50px;top:406.64px;font-size:18.50px;transform:scaleX(1.0040);">Rel Hum</span>
<span class="t" style="left:801.46px;top:406.64px;font-size:18.50px;">0</span>
<span class="t" style="left:646.25px;top:435.64px;font-size:18.50px;transform:scaleX(0.9920);">Local mB</span>
<span class="t" style="left:742.25px;top:435.64px;font-size:18.50px;transform:scaleX(1.0505);">1013.25</span>
<span class="t" style="left:869.25px;top:435.64px;font-size:18.50px;transform:scaleX(1.0852);">760</span>
<span class="t" style="left:909.75px;top:435.64px;font-size:18.50px;transform:scaleX(1.0201);">mmHG</span>
<span class="t" style="left:639.75px;top:464.64px;font-size:18.50px;transform:scaleX(1.0090);">cal val O2</span>
<span class="t" style="left:763.75px;top:464.64px;font-size:18.50px;transform:scaleX(1.0530);">20.90</span>
<span class="t" style="left:853.75px;top:464.64px;font-size:18.50px;transform:scaleX(1.0584);">20.90</span>
<span class="t" style="left:909.75px;top:464.64px;font-size:18.50px;transform:scaleX(1.0402);">std cond</span>
<span class="t" style="left:603.50px;top:493.64px;font-size:18.50px;font-weight:700;transform:scaleX(0.9749);">Autronic %O2</span>
<span class="t" style="left:748.00px;top:493.64px;font-size:18.50px;font-weight:700;transform:scaleX(1.0319);">20.90%</span>
<span class="t" style="left:633.00px;top:522.64px;font-size:18.50px;">gain+ loss-</span>
<span class="t" style="left:758.75px;top:522.64px;font-size:18.50px;color:#80806a;font-weight:700;transform:scaleX(1.0294);">0.00%</span>
<span class="t" style="left:600.50px;top:580.64px;font-size:18.50px;color:#e8000a;font-weight:700;transform:scaleX(0.9908);">Effective %O2</span>
<span class="t" style="left:748.00px;top:580.64px;font-size:18.50px;font-weight:700;transform:scaleX(1.0319);">20.95%</span>
<span class="t" style="left:852.50px;top:580.64px;font-size:18.50px;color:#e8000a;font-weight:700;transform:scaleX(1.0854);">20.95</span>
<span class="t" style="left:909.75px;top:580.64px;font-size:18.50px;color:#e8000a;font-weight:700;transform:scaleX(0.9438);">std cond</span>
<span class="t" style="left:639.25px;top:609.64px;font-size:18.50px;transform:scaleX(0.9556);">ECM %O2</span>
<span class="t" style="left:748.00px;top:609.64px;font-size:18.50px;color:#80806a;font-weight:700;transform:scaleX(1.0319);">20.95%</span>
<span class="t" style="left:819.25px;top:609.64px;font-size:18.50px;transform:scaleX(1.0137);">Actual % change</span>
<span class="t" style="left:1001.00px;top:377.64px;font-size:18.50px;transform:scaleX(0.9876);">Dry deg C</span>
<span class="t" style="left:1153.00px;top:377.64px;font-size:18.50px;transform:scaleX(1.0483);">12.4</span>
<span class="t" style="left:995.00px;top:406.64px;font-size:18.50px;transform:scaleX(1.0136);">Wet deg C</span>
<span class="t" style="left:1153.00px;top:406.64px;font-size:18.50px;transform:scaleX(1.0483);">10.8</span>
<span class="t" style="left:1039.75px;top:435.64px;font-size:18.50px;transform:scaleX(1.0718);">delta</span>
<span class="t" style="left:1173.76px;top:440.97px;font-size:12.20px;transform:scaleX(1.0606);">1.6</span>
<span class="t" style="left:1070.00px;top:464.64px;font-size:18.50px;transform:scaleX(1.0331);">A</span>
<span class="t" style="left:1159.51px;top:469.97px;font-size:12.20px;transform:scaleX(1.0559);">0.001</span>
<span class="t" style="left:1033.00px;top:493.64px;font-size:18.50px;transform:scaleX(0.9132);">ESWB</span>
<span class="t" style="left:1159.51px;top:498.97px;font-size:12.20px;transform:scaleX(1.0559);">0.226</span>
<span class="t" style="left:1059.75px;top:522.64px;font-size:18.50px;transform:scaleX(0.8949);">ED</span>
<span class="t" style="left:1159.51px;top:527.97px;font-size:12.20px;transform:scaleX(1.0882);">0.118</span>
<span class="t" style="left:1038.75px;top:551.64px;font-size:18.50px;transform:scaleX(0.8733);">EDSB</span>
<span class="t" style="left:1159.51px;top:556.97px;font-size:12.20px;transform:scaleX(1.0559);">0.319</span>
<span class="t" style="left:1058.75px;top:580.64px;font-size:18.50px;transform:scaleX(0.8981);">RH</span>
<span class="t" style="left:1125.50px;top:580.64px;font-size:18.50px;font-weight:700;transform:scaleX(1.0478);">37.02%</span><svg style="left:450px;top:393px" width="8" height="8" viewBox="0 0 8 8"><path d="M2.6 6.4 L5.6 3.4" stroke="#111" stroke-width="1.1"/></svg><div class="b" style="left:456px;top:52px;width:3px;height:985px;background:linear-gradient(90deg,#d383e3 0,#d383e3 2px,#c78ad4 2px);"></div><div class="b" style="left:7px;top:400px;width:1279px;height:3px;background:linear-gradient(#d383e3 0,#d383e3 2px,#c78ad4 2px);"></div></div></div>
<div class="b" style="left:1284px;top:52px;width:16px;height:982px;background:#6f6f6f;"></div>
<div class="b" style="left:1285.5px;top:53.6px;width:13.8px;height:7px;background:linear-gradient(#8a8a8a,#6a6a6a);border:1px solid #b0b0b0;box-shadow:inset 0 2px 0 #777, inset 0 3.2px 0 #c0c0c0;"></div>
<svg style="left:1284px;top:60px" width="16" height="20" viewBox="0 0 16 20"><path d="M3.4 12.2 L8 7.2 L12.6 12.2 Z" fill="#2c2c2c"/></svg>
<div class="b" style="left:1285px;top:78px;width:13.8px;height:910px;background:linear-gradient(90deg,#8e8e8e,#7a7a7a 50%,#6c6c6c);border:1px solid #3e3e3e;border-radius:1px;box-shadow:inset 1px 1px 0 rgba(255,255,255,.18);"></div>
<svg style="left:1284px;top:526px" width="16" height="14" viewBox="0 0 16 14"><path d="M4.6 3.5 H11 M4.6 5.5 H11 M4.6 7.5 H11 M4.6 9.5 H11" stroke="#b4b4b4" stroke-width=".8"/></svg>
<svg style="left:1284px;top:1016px" width="16" height="18" viewBox="0 0 16 18"><path d="M3.4 7.2 L8 12.4 L12.6 7.2 Z" fill="#2c2c2c"/></svg>
<div class="b" style="left:7px;top:1034px;width:1293px;height:16.4px;background:linear-gradient(#2c2c2c 0,#2c2c2c 1.2px,#8c8c8c 1.4px,#747474 3px,#6a6a6a 13.4px,#8a8a8a 13.8px,#8a8a8a 14.8px,#2c2c2c 15px);"></div>
<div class="b" style="left:1284px;top:1034px;width:16px;height:16px;background:#6f6f6f;"></div>
<svg style="left:7px;top:1035px" width="64" height="15" viewBox="0 0 64 15">
<rect x="0" y="0" width="63" height="15" fill="#6c6c6c"/>
<path d="M6.3 3.2 V10.2" stroke="#cfcfcf" stroke-width="1.2"/><path d="M12 3 L7.4 6.7 L12 10.4 Z" fill="#cfcfcf"/>
<path d="M26.2 3 L21.8 6.7 L26.2 10.4 Z" fill="#cfcfcf"/>
<path d="M35.8 3 L40.3 6.7 L35.8 10.4 Z" fill="#cfcfcf"/>
<path d="M49.8 3 L54.3 6.7 L49.8 10.4 Z" fill="#cfcfcf"/><path d="M55.6 3.2 V10.2" stroke="#cfcfcf" stroke-width="1.2"/>
</svg>
<svg style="left:0;top:0" width="1307" height="1079" viewBox="0 0 1307 1079"><defs><linearGradient id="gtab" x1="0" y1="0" x2="0" y2="1"><stop offset="0" stop-color="#8f8f8f"/><stop offset=".5" stop-color="#7c7c7c"/><stop offset="1" stop-color="#6b6b6b"/></linearGradient></defs><path d="M70.5 1049.6 V1036.2 H240 V1049.6 Z" fill="url(#gtab)" stroke="#2e2e2e"/><path d="M71.6 1049 V1037.2 H240" fill="none" stroke="#b4b4b4" stroke-width=".8"/><path d="M226 1049.6 L240 1036.2 L328 1036.2 L328 1049.6 Z" fill="url(#gtab)" stroke="#2e2e2e" stroke-width="1"/><path d="M227.4 1049.2 L240.6 1037.2 L327 1037.2" fill="none" stroke="#b4b4b4" stroke-width=".8"/><path d="M311 1049.6 L325 1036.2 L440 1036.2 L440 1049.6 Z" fill="url(#gtab)" stroke="#2e2e2e" stroke-width="1"/><path d="M312.4 1049.2 L325.6 1037.2 L439 1037.2" fill="none" stroke="#b4b4b4" stroke-width=".8"/><path d="M423 1049.6 L437 1036.2 L509 1036.2 L509 1049.6 Z" fill="url(#gtab)" stroke="#2e2e2e" stroke-width="1"/><path d="M424.4 1049.2 L437.6 1037.2 L508 1037.2" fill="none" stroke="#b4b4b4" stroke-width=".8"/><path d="M492 1049.6 L506 1036.2 L573 1036.2 L573 1049.6 Z" fill="url(#gtab)" stroke="#2e2e2e" stroke-width="1"/><path d="M493.4 1049.2 L506.6 1037.2 L572 1037.2" fill="none" stroke="#b4b4b4" stroke-width=".8"/><path d="M556 1049.6 L570 1036.2 L604 1036.2 L604 1049.6 Z" fill="url(#gtab)" stroke="#2e2e2e" stroke-width="1"/><path d="M557.4 1049.2 L570.6 1037.2 L603 1037.2" fill="none" stroke="#b4b4b4" stroke-width=".8"/><path d="M587 1049.6 L601 1036.2 L734 1036.2 L734 1049.6 Z" fill="url(#gtab)" stroke="#2e2e2e" stroke-width="1"/><path d="M588.4 1049.2 L601.6 1037.2 L733 1037.2" fill="none" stroke="#b4b4b4" stroke-width=".8"/><path d="M717 1049.6 L731 1036.2 L879 1036.2 L879 1049.6 Z" fill="url(#gtab)" stroke="#2e2e2e" stroke-width="1"/><path d="M718.4 1049.2 L731.6 1037.2 L878 1037.2" fill="none" stroke="#b4b4b4" stroke-width=".8"/><path d="M966 1049.6 L980 1036.2 L1091 1036.2 L1091 1049.6 Z" fill="url(#gtab)" stroke="#2e2e2e"/><path d="M967.4 1049.2 L980.6 1037.2 L1090 1037.2" fill="none" stroke="#b4b4b4" stroke-width=".8"/><path d="M880.6 1050.6 L880.6 1034.2 L981.5 1034.2 L968.4 1050.6 Z" fill="#fff" stroke="#3a3a3a" stroke-width=".8"/><rect x="881.2" y="1033.6" width="98.6" height="2" fill="#fff"/></svg>
<div class="b" style="left:1091px;top:1035px;width:193px;height:15px;background:#6f6f6f;"></div>
<div class="b" style="left:1092.5px;top:1036.5px;width:5.6px;height:12.6px;background:linear-gradient(#9a9a9a,#707070);border:1px solid #2e2e2e;box-shadow:inset 1.4px 0 0 #d0d0d0;"></div>
<svg style="left:1099px;top:1035px" width="185" height="15" viewBox="0 0 185 15"><path d="M9.6 2.8 L4.6 7.4 L9.6 12 Z" fill="#1e1e1e"/><path d="M166.4 2.8 L171.4 7.4 L166.4 12 Z" fill="#1e1e1e"/></svg>
<div class="b" style="left:1116.6px;top:1035.4px;width:130.6px;height:13.8px;background:linear-gradient(#858585,#747474 50%,#686868);border:1px solid #2e2e2e;border-radius:2px;box-shadow:inset 0 1px 0 rgba(255,255,255,.2);"></div>
<svg style="left:1175px;top:1035px" width="20" height="15" viewBox="0 0 20 15"><path d="M3.5 4.4 V10.4 M5.5 4.4 V10.4 M7.5 4.4 V10.4 M9.5 4.4 V10.4" stroke="#c4c4c4" stroke-width=".8"/></svg>
<div class="b" style="left:1277.4px;top:1036.5px;width:5.6px;height:12.6px;background:linear-gradient(#9a9a9a,#707070);border:1px solid #2e2e2e;box-shadow:inset 1.4px 0 0 #d0d0d0;"></div>
<div class="b" style="left:7px;top:1050.2px;width:1293px;height:22.4px;background:linear-gradient(#2a2a2a 0,#454545 1.5px,#3a3a3a 50%,#2f2f2f 100%);"></div>
<div class="b" style="left:54px;top:1051.5px;width:1px;height:20px;background:#1c1c1c;box-shadow:1px 0 0 #5a5a5a;"></div>
<div class="b" style="left:1044px;top:1051.5px;width:1px;height:20px;background:#1c1c1c;box-shadow:1px 0 0 #5a5a5a;"></div>
<svg style="left:1046px;top:1050px" width="60" height="23" viewBox="1046 1050 60 23">
<rect x="1049.5" y="1052.3" width="17" height="18" rx="2" fill="#f9e7a0" stroke="#f3c64e" stroke-width="1.4"/>
<rect x="1052.4" y="1055.6" width="11.2" height="10.8" fill="#fff" stroke="#6a6a6a" stroke-width=".8"/>
<path d="M1056.1 1055.6 V1066.4 M1059.9 1055.6 V1066.4 M1052.4 1059.2 H1063.6 M1052.4 1062.8 H1063.6" stroke="#6a6a6a" stroke-width=".8"/>
<rect x="1070.5" y="1055.2" width="10.6" height="11.6" fill="#e8e8e8" stroke="#9a9a9a" stroke-width=".8"/>
<rect x="1072.6" y="1057.6" width="6.4" height="7" fill="#fff" stroke="#555" stroke-width=".7"/><path d="M1074 1059.8 h3.6 M1074 1061.4 h3.6 M1074 1063 h3.6" stroke="#666" stroke-width=".6"/>
<rect x="1088.4" y="1054.8" width="12.4" height="12" fill="#bdbdbd" stroke="#8a8a8a" stroke-width=".6"/>
<rect x="1089.6" y="1055.4" width="3.8" height="7.2" fill="#fff"/><rect x="1094.4" y="1055.4" width="3.4" height="7.2" fill="#fff"/>
</svg>
<svg style="left:1146px;top:1050px" width="154" height="23" viewBox="1146 1050 154 23">
<defs><radialGradient id="gzb" cx=".5" cy=".35" r=".7"><stop offset="0" stop-color="#e2e2e2"/><stop offset="1" stop-color="#8e8e8e"/></radialGradient>
<linearGradient id="gzt" x1="0" y1="0" x2="0" y2="1"><stop offset="0" stop-color="#e8e8e8"/><stop offset="1" stop-color="#9a9a9a"/></linearGradient></defs>
<path d="M1164 1061.4 H1266" stroke="#8c8c8c" stroke-width="1"/><path d="M1215.4 1057 V1066" stroke="#8c8c8c" stroke-width="1"/>
<circle cx="1157" cy="1061" r="7" fill="url(#gzb)" stroke="#555" stroke-width=".6"/><rect x="1152.8" y="1060" width="8.4" height="2.2" fill="#333"/>
<circle cx="1273" cy="1061" r="7" fill="url(#gzb)" stroke="#555" stroke-width=".6"/><path d="M1268.8 1061.1 H1277.2 M1273 1056.9 V1065.3" stroke="#333" stroke-width="2.2"/>
<path d="M1217.2 1054.8 H1225 V1062 L1221.1 1066 L1217.2 1062 Z" fill="url(#gzt)" stroke="#555" stroke-width=".7"/>
<path d="M1298 1063 v2 M1295 1066 h2 v2 M1298 1066 v2 M1292 1069 h2 M1295 1069 h2 M1298 1069 v2" stroke="#8a8a8a" stroke-width="1.6"/>
</svg><span class="t" style="left:450.04px;top:9.03px;font-size:11.30px;transform:scaleX(0.9862);">RICESP 1460x2 2200x2 4000mB relFP WM2080 donmega.xlsx  -  Microsoft Excel</span>
<span class="t" style="left:25.55px;top:34.92px;font-size:11.20px;color:#fff;transform:scaleX(1.0476);text-shadow:0 0 .6px #fff,0 1px 1px rgba(0,0,0,.5);">File</span>
<span class="t" style="left:79.55px;top:34.92px;font-size:11.20px;color:#fff;transform:scaleX(1.0345);text-shadow:0 0 .6px #fff,0 1px 1px rgba(0,0,0,.5);">Home</span>
<span class="t" style="left:137.05px;top:34.92px;font-size:11.20px;color:#fff;transform:scaleX(1.0855);text-shadow:0 0 .6px #fff,0 1px 1px rgba(0,0,0,.5);">Insert</span>
<span class="t" style="left:194.55px;top:34.92px;font-size:11.20px;color:#fff;text-shadow:0 0 .6px #fff,0 1px 1px rgba(0,0,0,.5);">Page Layout</span>
<span class="t" style="left:284.55px;top:34.92px;font-size:11.20px;color:#fff;transform:scaleX(1.0264);text-shadow:0 0 .6px #fff,0 1px 1px rgba(0,0,0,.5);">Formulas</span>
<span class="t" style="left:359.55px;top:34.92px;font-size:11.20px;color:#fff;transform:scaleX(1.0528);text-shadow:0 0 .6px #fff,0 1px 1px rgba(0,0,0,.5);">Data</span>
<span class="t" style="left:411.55px;top:34.92px;font-size:11.20px;color:#fff;transform:scaleX(1.0050);text-shadow:0 0 .6px #fff,0 1px 1px rgba(0,0,0,.5);">Review</span>
<span class="t" style="left:475.55px;top:34.92px;font-size:11.20px;color:#fff;transform:scaleX(1.0761);text-shadow:0 0 .6px #fff,0 1px 1px rgba(0,0,0,.5);">View</span>
<span class="t" style="left:528.55px;top:34.92px;font-size:11.20px;color:#fff;transform:scaleX(0.9949);text-shadow:0 0 .6px #fff,0 1px 1px rgba(0,0,0,.5);">Kutools ™</span>
<span class="t" style="left:607.55px;top:34.92px;font-size:11.20px;color:#fff;transform:scaleX(1.0365);text-shadow:0 0 .6px #fff,0 1px 1px rgba(0,0,0,.5);">Enterprise</span>
<span class="t" style="left:85.52px;top:1037.11px;font-size:11.80px;color:#ececec;transform:scaleX(1.0694);">End Of Injection Timing</span>
<span class="t" style="left:242.52px;top:1037.11px;font-size:11.80px;color:#ececec;transform:scaleX(1.0240);">Parameters</span>
<span class="t" style="left:328.52px;top:1037.11px;font-size:11.80px;color:#ececec;transform:scaleX(1.1047);">Water Injection</span>
<span class="t" style="left:437.52px;top:1037.11px;font-size:11.80px;color:#ececec;transform:scaleX(1.0156);">Fuel map</span>
<span class="t" style="left:508.52px;top:1037.11px;font-size:11.80px;color:#ececec;transform:scaleX(1.0073);">Lambda</span>
<span class="t" style="left:570.02px;top:1037.11px;font-size:11.80px;color:#ececec;transform:scaleX(1.1214);">Ve</span>
<span class="t" style="left:605.52px;top:1037.11px;font-size:11.80px;color:#ececec;transform:scaleX(1.0567);">PowerTorque MAP</span>
<span class="t" style="left:738.52px;top:1037.11px;font-size:11.80px;color:#ececec;transform:scaleX(0.9952);">DSPS Phase Anti Phase</span>
<span class="t" style="left:985.52px;top:1037.11px;font-size:11.80px;color:#ececec;transform:scaleX(1.0993);">wastegate setting</span>
<span class="t" style="left:890.52px;top:1037.11px;font-size:11.80px;color:#1a1a1a;font-weight:700;transform:scaleX(1.0348);">Lambda TEP</span>
<span class="t" style="left:15.05px;top:1055.72px;font-size:11.20px;color:#eee;transform:scaleX(0.9701);">Ready</span>
<span class="t" style="left:1113.05px;top:1055.72px;font-size:11.20px;color:#eee;transform:scaleX(0.9917);">140%</span></div>
<!-- Combustion dialog -->
<div id="dialog"><div class="b" style="left:1307.8px;top:492.6px;width:494.8px;height:585.8px;background:linear-gradient(#cfcfcf 0,#d9d9d9 14px,#d2d2d2 28px,#bdbdbd 60px,#8a8a8a 120px,#4e4e4e 200px,#2a2a2a 262px,#1c1c1c 100%);border-radius:7px 7px 6px 6px;border:1px solid #3a3a3a;box-shadow:0 0 5px 1px rgba(0,0,0,.55), inset 0 1px 0 #f4f4f4;"></div>
<div class="b" style="left:1309px;top:494px;width:492px;height:27px;background:linear-gradient(180deg,#d6d6d6,#dcdcdc 40%,#cfcfcf);border-radius:6px 6px 0 0;"></div>
<div class="b" style="left:1330px;top:494px;width:330px;height:26px;background:linear-gradient(90deg,rgba(255,255,255,0),rgba(255,255,255,.35) 30%,rgba(255,255,255,.35) 70%,rgba(255,255,255,0));"></div>
<div class="b" style="left:1308.8px;top:519px;width:5.8px;height:552px;background:linear-gradient(90deg,#585858 0,#7c7c7c 45%,#b4b4b4 85%,#d8d8d8 100%);"></div>
<div class="b" style="left:1308.8px;top:519px;width:5.8px;height:552px;background:linear-gradient(rgba(210,210,210,.7) 0,rgba(120,120,120,.1) 30px,rgba(60,60,60,.1) 150px,rgba(10,10,10,.8) 215px,rgba(5,5,5,.92) 100%);"></div>
<div class="b" style="left:1796px;top:521px;width:6px;height:552px;background:linear-gradient(90deg,#9a9a9a 0,#e8e8e8 45%,#bdbdbd 60%,#555 100%);"></div>
<div class="b" style="left:1796px;top:521px;width:6px;height:552px;background:linear-gradient(rgba(200,200,200,.85) 0,rgba(200,200,200,.8) 150px,rgba(40,40,40,.55) 178px,rgba(20,20,20,.72) 240px,rgba(10,10,10,.8) 100%);"></div>
<div class="b" style="left:1309.6px;top:1070.6px;width:492.4px;height:7px;background:linear-gradient(#777 0,#1a1a1a 1.4px,#0e0e0e 4px,#3a3a3a 5.2px,#0a0a0a 7px);border-radius:0 0 6px 6px;"></div>
<div class="b" style="left:1314.6px;top:521px;width:481.4px;height:549.8px;background:#f0f0f0;border:1px solid #6e6e6e;border-right-color:#7a7a7a;border-bottom-color:#e8e8e8;"></div>
<div class="b" style="left:1315.6px;top:522px;width:8px;height:547.8px;background:linear-gradient(90deg,#dadada,#f0f0f0);"></div>
<div class="b" style="left:1749px;top:492.6px;width:46.8px;height:19.2px;background:linear-gradient(#dedede,#d2d2d2 48%,#c4c4c4 52%,#cecece);border:1px solid #8e8e8e;border-top:none;border-radius:0 0 5px 5px;box-shadow:inset 1px -1px 0 rgba(255,255,255,.6),inset -1px 0 0 rgba(255,255,255,.6);"></div>
<svg style="left:1766px;top:495px" width="16" height="14" viewBox="0 0 16 14"><path d="M2 2 h4 l1.5 2.2 l1.5 -2.2 h4 l-3.6 4.9 l3.6 4.9 h-4 l-1.5 -2.2 l-1.5 2.2 h-4 l3.6 -4.9 z" fill="#fff" stroke="#707070" stroke-width=".9"/></svg>
<svg style="left:1315px;top:498.6px" width="16" height="16" viewBox="0 0 16 16">
<rect x="0" y="0" width="16" height="16" fill="#1a1ab8"/>
<path d="M0 11 L4 16 H0 Z M16 11 V16 H9 Z" fill="#fff" opacity=".9"/>
<path d="M5.5 1.5 l3 -1.2 l3 1.2 v3.6 l-3 1.4 l-3 -1.4 z" fill="#22d0d8"/><path d="M8.5 2.9 v3.6 l-3 -1.4 v-3.6 z" fill="#0a0a0a"/>
<path d="M1.2 8.4 l3 -1.2 l3 1.2 v3.8 l-3 1.4 l-3 -1.4 z" fill="#22d0d8"/><path d="M4.2 9.8 v3.8 l-3 -1.4 v-3.8 z" fill="#0a0a0a"/>
<path d="M9 8.8 l3 -1.2 l3 1.2 v3.8 l-3 1.4 l-3 -1.4 z" fill="#e8f8f8"/><path d="M12 10.2 v3.8 l-3 -1.4 v-3.8 z" fill="#0a0a0a"/><path d="M12 10.2 v3.8 l3 -1.4 v-3.8 z" fill="#20b8c0"/>
</svg>
<div class="gb" style="left:1326px;top:539.2px;width:458.4000000000001px;height:34.39999999999998px"></div>
<div class="gb" style="left:1326px;top:582.4px;width:458.4000000000001px;height:117.80000000000007px"></div>
<div class="gb" style="left:1326px;top:713.2px;width:458.4000000000001px;height:52.799999999999955px"></div>
<div class="gb" style="left:1326px;top:780.6px;width:458.4000000000001px;height:211.60000000000002px"></div>
<div class="gb" style="left:1326px;top:1005.8px;width:458.4000000000001px;height:56.799999999999955px"></div>
<div class="gl" style="left:1333px;top:577.4px;width:173.5px"></div>
<div class="gl" style="left:1333px;top:708.2px;width:43px"></div>
<div class="gl" style="left:1333px;top:775.6px;width:94px"></div>
<div class="in" style="left:1517.6px;top:610px;width:68.0px;height:22.799999999999955px"></div>
<div class="in" style="left:1640.8px;top:610px;width:67.79999999999995px;height:22.799999999999955px"></div>
<div class="in" style="left:1518.8px;top:667px;width:67.60000000000014px;height:22.799999999999955px"></div>
<div class="in" style="left:1640.8px;top:667px;width:67.79999999999995px;height:22.799999999999955px"></div>
<div class="ro" style="left:1348px;top:821.2px;width:64px;height:22.0px"></div>
<div class="ro" style="left:1417px;top:821.2px;width:64px;height:22.0px"></div>
<div class="ro" style="left:1485.8px;top:821.2px;width:64.20000000000005px;height:22.0px"></div>
<div class="ro" style="left:1554.6px;top:821.2px;width:64.20000000000005px;height:22.0px"></div>
<div class="ro" style="left:1623.6px;top:821.2px;width:64.20000000000005px;height:22.0px"></div>
<div class="ro" style="left:1692.6px;top:821.2px;width:64.40000000000009px;height:22.0px"></div>
<div class="ro" style="left:1383px;top:880px;width:64px;height:22px"></div>
<div class="ro" style="left:1520.8px;top:880px;width:64.20000000000005px;height:22px"></div>
<div class="ro" style="left:1656.8px;top:880px;width:64.0px;height:22px"></div>
<div class="ro" style="left:1522px;top:949px;width:61px;height:22px"></div>
<div class="bt" style="left:1490.6px;top:728px;width:134px;height:22.6px"></div>
<div class="bt" style="left:1516.2px;top:1026.2px;width:74.4px;height:22.4px"></div><span class="t" style="left:1335.53px;top:501.38px;font-size:11.60px;transform:scaleX(1.0286);">Combustion Balance Calculation</span>
<span class="t" style="left:1389.91px;top:552.67px;font-size:12.20px;transform:scaleX(0.8677);">Combustion Balance Calculation Application by Bowling and Grippo</span>
<span class="t" style="left:1334.51px;top:577.07px;font-size:12.20px;transform:scaleX(0.9011);">Hydrocarbon/Lambda/Temperature</span>
<span class="t" style="left:1524.51px;top:590.67px;font-size:12.20px;transform:scaleX(0.9264);">H/C Ratio</span>
<span class="t" style="left:1652.51px;top:590.67px;font-size:12.20px;transform:scaleX(0.8960);">O/C ratio</span>
<span class="t" style="left:1549.06px;top:614.27px;font-size:12.20px;transform:scaleX(0.8650);">4</span>
<span class="t" style="left:1671.56px;top:614.27px;font-size:12.20px;transform:scaleX(0.8650);">1</span>
<span class="t" style="left:1533.51px;top:650.67px;font-size:12.20px;transform:scaleX(0.8843);">Lambda</span>
<span class="t" style="left:1644.01px;top:650.67px;font-size:12.20px;transform:scaleX(0.8806);">Temp (deg K)</span>
<span class="t" style="left:1549.56px;top:671.27px;font-size:12.20px;transform:scaleX(0.8650);">1</span>
<span class="t" style="left:1663.26px;top:671.27px;font-size:12.20px;transform:scaleX(0.8650);">1740</span>
<span class="t" style="left:1334.51px;top:708.07px;font-size:12.20px;transform:scaleX(0.9071);">Execute</span>
<span class="t" style="left:1510.51px;top:733.27px;font-size:12.20px;transform:scaleX(0.8809);">Execute Calculation</span>
<span class="t" style="left:1334.51px;top:775.47px;font-size:12.20px;transform:scaleX(0.8713);">Calculation Results</span>
<span class="t" style="left:1371.14px;top:804.27px;font-size:12.20px;transform:scaleX(0.8650);">CO%</span>
<span class="t" style="left:1436.21px;top:804.27px;font-size:12.20px;transform:scaleX(0.8650);">CO2%</span>
<span class="t" style="left:1503.71px;top:804.27px;font-size:12.20px;transform:scaleX(0.8650);">H2O%</span>
<span class="t" style="left:1575.56px;top:804.27px;font-size:12.20px;transform:scaleX(0.8650);">H2%</span>
<span class="t" style="left:1644.02px;top:804.27px;font-size:12.20px;transform:scaleX(0.8650);">O2%</span>
<span class="t" style="left:1715.31px;top:804.27px;font-size:12.20px;transform:scaleX(0.8650);">N2%</span>
<span class="t" style="left:1370.33px;top:825.47px;font-size:12.20px;transform:scaleX(0.8650);">0.00</span>
<span class="t" style="left:1436.59px;top:825.47px;font-size:12.20px;transform:scaleX(0.8650);">11.55</span>
<span class="t" style="left:1505.00px;top:825.47px;font-size:12.20px;transform:scaleX(0.8650);">23.10</span>
<span class="t" style="left:1576.93px;top:825.47px;font-size:12.20px;transform:scaleX(0.8650);">0.00</span>
<span class="t" style="left:1645.73px;top:825.47px;font-size:12.20px;transform:scaleX(0.8650);">0.00</span>
<span class="t" style="left:1712.00px;top:825.47px;font-size:12.20px;transform:scaleX(0.8650);">65.36</span>
<span class="t" style="left:1391.25px;top:863.47px;font-size:12.20px;transform:scaleX(0.8650);">Total Mols</span>
<span class="t" style="left:1506.87px;top:863.47px;font-size:12.20px;transform:scaleX(0.8650);">Stoichiometric Point</span>
<span class="t" style="left:1669.26px;top:863.47px;font-size:12.20px;transform:scaleX(0.8650);">Kp Ratio</span>
<span class="t" style="left:1405.33px;top:884.47px;font-size:12.20px;transform:scaleX(0.8650);">4.33</span>
<span class="t" style="left:1543.13px;top:884.47px;font-size:12.20px;transform:scaleX(0.8650);">6.43</span>
<span class="t" style="left:1679.13px;top:884.47px;font-size:12.20px;transform:scaleX(0.8650);">3.50</span>
<span class="t" style="left:1469.51px;top:931.47px;font-size:12.20px;transform:scaleX(0.8720);">Brettschneider Lambda Verification</span>
<span class="t" style="left:1542.33px;top:953.27px;font-size:12.20px;transform:scaleX(0.8650);">1.00</span>
<span class="t" style="left:1545.78px;top:1031.67px;font-size:12.20px;transform:scaleX(0.8650);">OK</span></div>
</body></html>
